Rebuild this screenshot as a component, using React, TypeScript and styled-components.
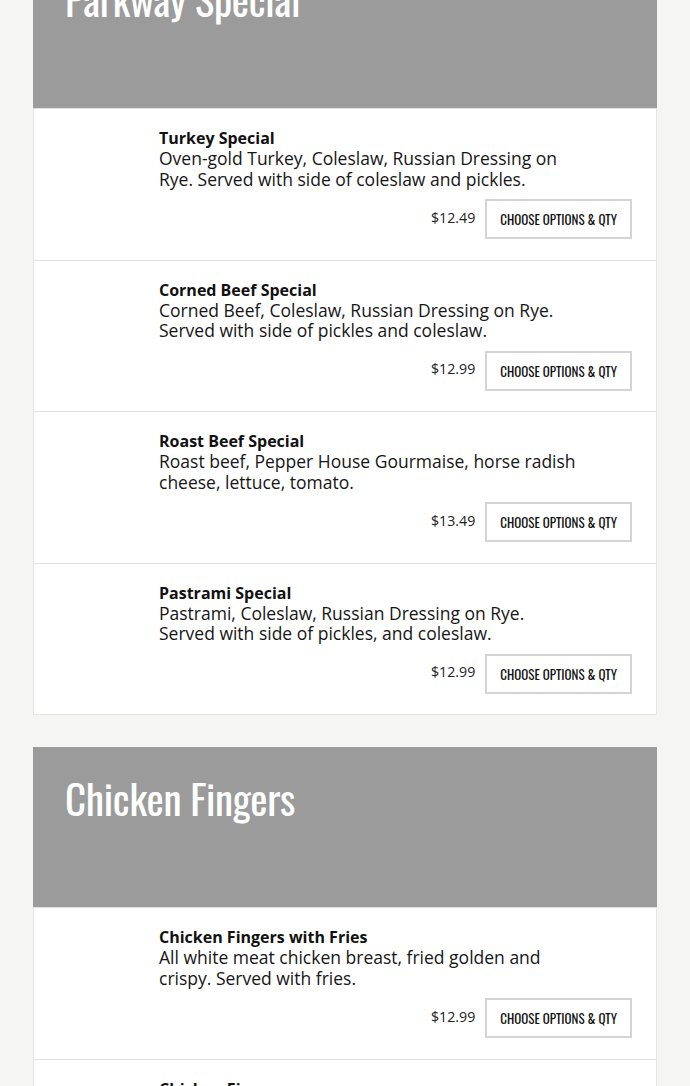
import styled, { createGlobalStyle } from 'styled-components';

const GlobalStyle = createGlobalStyle`
  html, body {
    margin: 0;
    padding: 0;
    background: #f5f5f4;
  }
  body {
    font-family: "Open Sans", "Liberation Sans", sans-serif;
    color: #1a1a1a;
  }
`;

const condensed = `"Oswald", "Liberation Sans Narrow", "DejaVu Sans Condensed", sans-serif`;

const Page = styled.div`
  display: flex;
  flex-direction: column;
  gap: 32px;
  padding: 0 33px;
  margin-top: -52px;
`;

const Category = styled.section`
  display: flex;
  flex-direction: column;
  background: #fff;
  border: 1px solid #e4e4e4;
  border-top: none;
`;

const CategoryHeader = styled.div`
  height: 160px;
  margin: 0 -1px;
  background: #9b9b9b;
  padding: 26px 32px 0;
  box-sizing: border-box;
`;

const CategoryTitle = styled.h2`
  margin: 0;
  font-family: ${condensed};
  font-weight: 400;
  font-size: 41px;
  line-height: 50px;
  color: #fff;
  letter-spacing: -0.3px;
`;

const Item = styled.div`
  display: flex;
  flex-direction: column;
  padding: 20px 24px 20.5px 125px;
  border-top: 1px solid #e2e2e2;

  &:first-of-type {
    border-top: none;
  }
`;

const ItemName = styled.div`
  font-weight: 700;
  font-size: 16px;
  line-height: 19px;
  color: #111;
`;

const ItemDesc = styled.div`
  max-width: 420px;
  font-size: 17.5px;
  line-height: 20.5px;
  color: #161616;
`;

const OrderRow = styled.div`
  display: flex;
  justify-content: flex-end;
  align-items: center;
  gap: 10px;
  margin-top: 10px;
`;

const Price = styled.span`
  font-size: 14.2px;
  color: #222;
  margin-top: -4px;
`;

const OptionsButton = styled.button`
  height: 40px;
  padding: 0 13px;
  background: #fff;
  border: 2px solid #d4d4d4;
  font-family: ${condensed};
  font-size: 13px;
  color: #111;
  text-transform: uppercase;
  cursor: pointer;
`;

type MenuItem = { name: string; desc: string; price: string };

const sections: { title: string; items: MenuItem[] }[] = [
  {
    title: 'Parkway Special',
    items: [
      {
        name: 'Turkey Special',
        desc: 'Oven-gold Turkey, Coleslaw, Russian Dressing on Rye. Served with side of coleslaw and pickles.',
        price: '$12.49',
      },
      {
        name: 'Corned Beef Special',
        desc: 'Corned Beef, Coleslaw, Russian Dressing on Rye. Served with side of pickles and coleslaw.',
        price: '$12.99',
      },
      {
        name: 'Roast Beef Special',
        desc: 'Roast beef, Pepper House Gourmaise, horse radish cheese, lettuce, tomato.',
        price: '$13.49',
      },
      {
        name: 'Pastrami Special',
        desc: 'Pastrami, Coleslaw, Russian Dressing on Rye. Served with side of pickles, and coleslaw.',
        price: '$12.99',
      },
    ],
  },
  {
    title: 'Chicken Fingers',
    items: [
      {
        name: 'Chicken Fingers with Fries',
        desc: 'All white meat chicken breast, fried golden and crispy. Served with fries.',
        price: '$12.99',
      },
      {
        name: 'Chicken Fingers',
        desc: 'All white meat chicken breast, fried golden and crispy.',
        price: '$10.99',
      },
    ],
  },
];

const App: React.FC = () => {
  return (
    <>
      <GlobalStyle />
      <Page>
        {sections.map((section) => (
          <Category key={section.title}>
            <CategoryHeader>
              <CategoryTitle>{section.title}</CategoryTitle>
            </CategoryHeader>
            {section.items.map((item) => (
              <Item key={item.name}>
                <ItemName>{item.name}</ItemName>
                <ItemDesc>{item.desc}</ItemDesc>
                <OrderRow>
                  <Price>{item.price}</Price>
                  <OptionsButton>Choose Options &amp; Qty</OptionsButton>
                </OrderRow>
              </Item>
            ))}
          </Category>
        ))}
      </Page>
    </>
  );
};

export default App;
